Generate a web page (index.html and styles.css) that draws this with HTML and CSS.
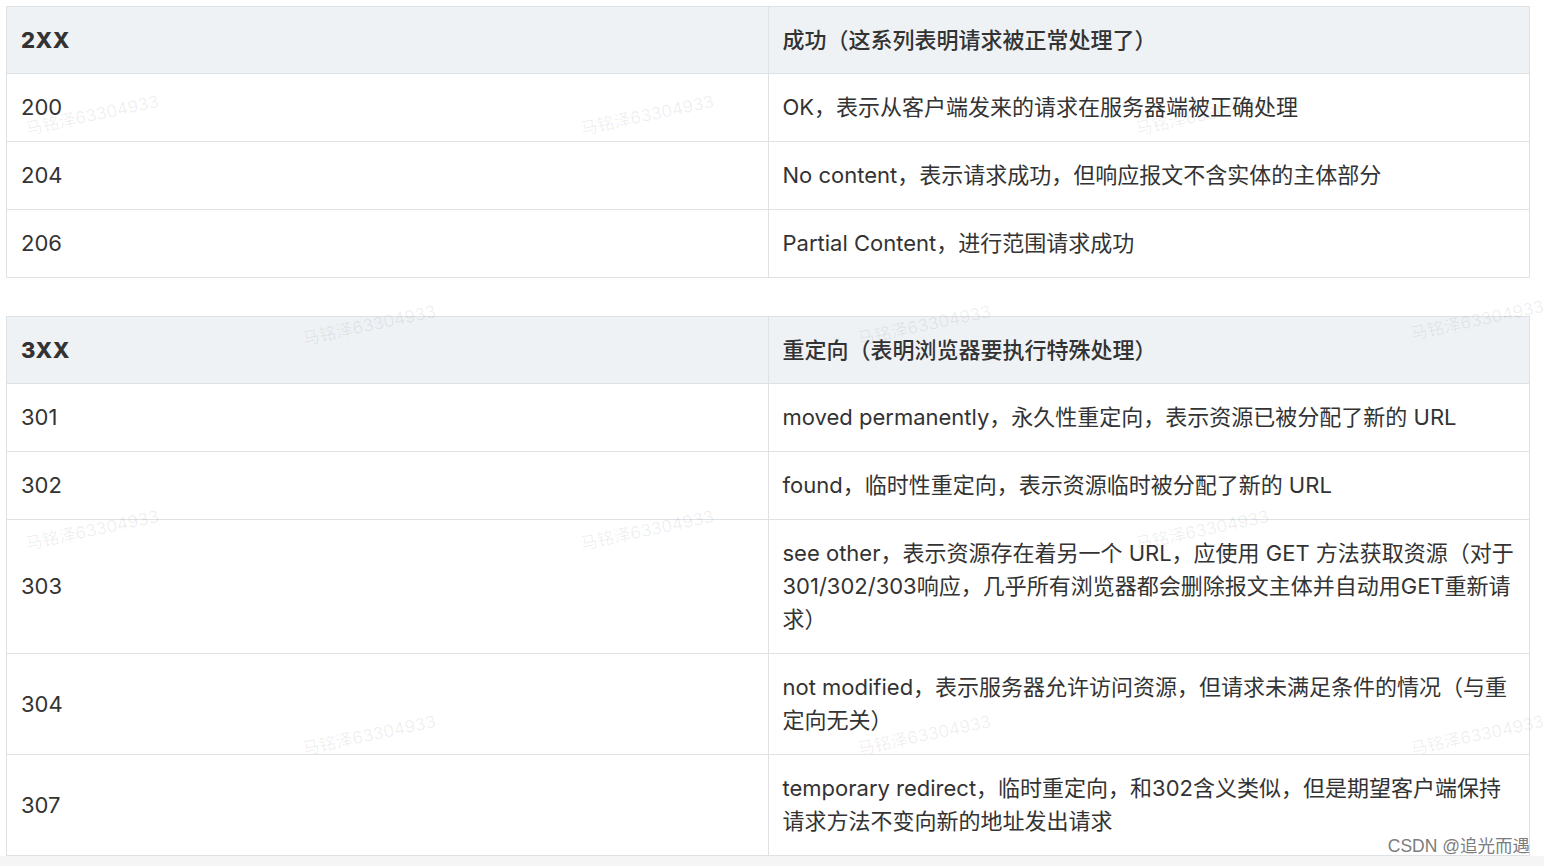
FILE: index.html
```html
<!DOCTYPE html>
<html lang="zh-CN">
<head>
<meta charset="utf-8">
<title>HTTP 状态码</title>
<link rel="stylesheet" href="styles.css">
</head>
<body>
<div class="page">
  <table class="status-table">
    <thead>
      <tr><th class="code-head">2XX</th><th class="desc-head">成功（这系列表明请求被正常处理了）</th></tr>
    </thead>
    <tbody>
      <tr><td>200</td><td>OK，表示从客户端发来的请求在服务器端被正确处理</td></tr>
      <tr><td>204</td><td>No content，表示请求成功，但响应报文不含实体的主体部分</td></tr>
      <tr><td>206</td><td>Partial Content，进行范围请求成功</td></tr>
    </tbody>
  </table>

  <table class="status-table">
    <thead>
      <tr><th class="code-head">3XX</th><th class="desc-head">重定向（表明浏览器要执行特殊处理）</th></tr>
    </thead>
    <tbody>
      <tr><td>301</td><td>moved permanently，永久性重定向，表示资源已被分配了新的 URL</td></tr>
      <tr><td>302</td><td>found，临时性重定向，表示资源临时被分配了新的 URL</td></tr>
      <tr><td>303</td><td>see other，表示资源存在着另一个 URL，应使用 GET 方法获取资源（对于 301/302/303响应，几乎所有浏览器都会删除报文主体并自动用GET重新请求）</td></tr>
      <tr><td>304</td><td>not modified，表示服务器允许访问资源，但请求未满足条件的情况（与重定向无关）</td></tr>
      <tr><td>307</td><td>temporary redirect，临时重定向，和302含义类似，但是期望客户端保持请求方法不变向新的地址发出请求</td></tr>
    </tbody>
  </table>

  <div class="wm wm-1">马铭泽63304933</div>
  <div class="wm wm-2">马铭泽63304933</div>
  <div class="wm wm-3">马铭泽63304933</div>
  <div class="wm wm-4">马铭泽63304933</div>
  <div class="wm wm-5">马铭泽63304933</div>
  <div class="wm wm-6">马铭泽63304933</div>
  <div class="wm wm-7">马铭泽63304933</div>
  <div class="wm wm-8">马铭泽63304933</div>
  <div class="wm wm-9">马铭泽63304933</div>
  <div class="wm wm-10">马铭泽63304933</div>
  <div class="wm wm-11">马铭泽63304933</div>
  <div class="wm wm-12">马铭泽63304933</div>

  <div class="csdn-mark">CSDN @追光而遇</div>
</div>
</body>
</html>
```

FILE: styles.css
```css
html {
  background: #f5f5f6;
}
body {
  margin: 0;
  font-family: Inter, "Noto Sans CJK SC", sans-serif;
  color: #333;
}
.page {
  position: relative;
  background: #fff;
  padding: 6px 14px 0 6px;
  height: 856px;
  box-sizing: border-box;
  overflow: hidden;
  display: flex;
  flex-direction: column;
  gap: 38px;
}
.status-table {
  width: 1524px;
  border-collapse: collapse;
  table-layout: fixed;
  font-size: 22px;
  line-height: 33px;
}
.status-table th,
.status-table td {
  border: 1px solid #dfe2e5;
  padding: 17px 14px;
  text-align: left;
  vertical-align: middle;
  width: 50%;
}
.status-table th {
  background: #eff2f5;
  color: #333;
  padding-bottom: 16px;
}
.code-head {
  font-weight: 800;
  letter-spacing: 0.5px;
}
.desc-head {
  font-weight: 500;
}
.wm {
  position: absolute;
  font-family: Inter, "Noto Sans CJK SC", sans-serif;
  font-size: 17px;
  color: rgba(0, 0, 0, 0.07);
  transform: rotate(-12deg);
  transform-origin: left bottom;
  white-space: nowrap;
  pointer-events: none;
}
.wm-1 { left: 28px; top: 115px; }
.wm-2 { left: 583px; top: 115px; }
.wm-3 { left: 1138px; top: 115px; }
.wm-4 { left: 305px; top: 325px; }
.wm-5 { left: 860px; top: 325px; }
.wm-6 { left: 1413px; top: 320px; }
.wm-7 { left: 28px; top: 530px; }
.wm-8 { left: 583px; top: 530px; }
.wm-9 { left: 1138px; top: 530px; }
.wm-10 { left: 305px; top: 735px; }
.wm-11 { left: 860px; top: 735px; }
.wm-12 { left: 1413px; top: 735px; }
.csdn-mark {
  position: absolute;
  right: 14px;
  bottom: 0;
  font-family: "Liberation Sans", "Noto Sans CJK SC", sans-serif;
  font-size: 17.5px;
  line-height: 19px;
  color: #7d7d7d;
  white-space: nowrap;
}
```
